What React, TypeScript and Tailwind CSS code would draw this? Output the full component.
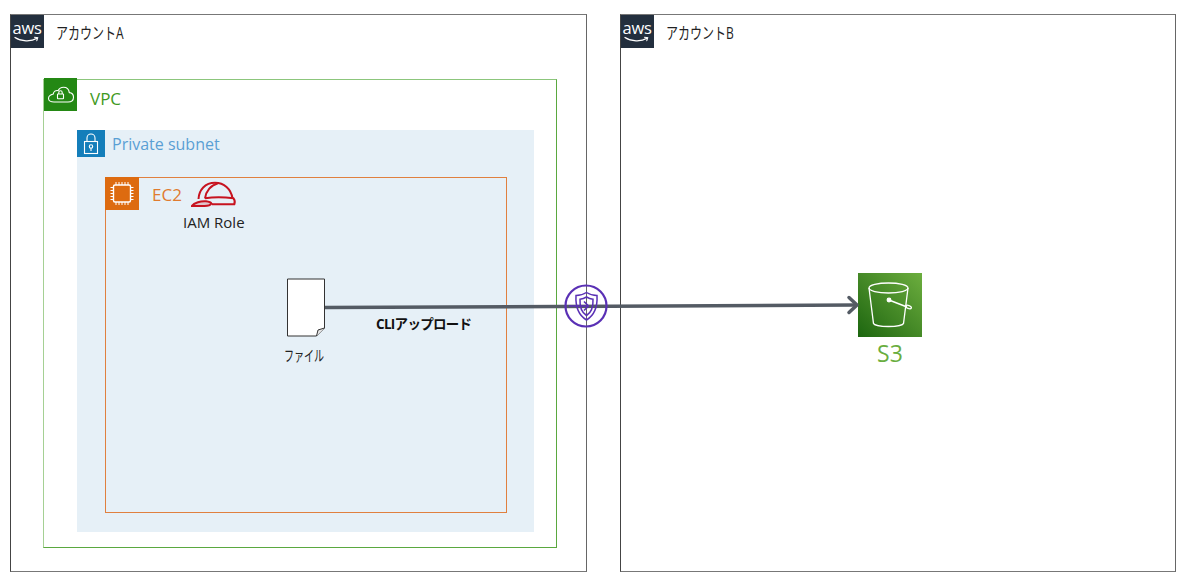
const jp = "font-['Open_Sans','Noto_Sans_CJK_JP',sans-serif]";

function AwsBadge() {
  return (
    <div className="w-[33px] h-[33px] bg-[#232f3e] flex items-center justify-center shrink-0">
      <svg width="33" height="33" viewBox="0 0 33 33" fill="none">
        <text x="16" y="19" textAnchor="middle" fontSize="16.500" fontWeight="500" letterSpacing="-.3" fill="#fff" fontFamily="Open Sans, sans-serif">aws</text>
        <path d="M4 22.500c6 4 16 4.500 22 .8" stroke="#fff" strokeWidth="1.300" strokeLinecap="round" />
        <path d="M23.500 22.200l3.200.4-.9 3" stroke="#fff" strokeWidth="1.100" strokeLinecap="round" />
      </svg>
    </div>
  );
}

function AccountHeader({ name }: { name: string }) {
  return (
    <div className="flex items-center h-[33px]">
      <AwsBadge />
      <span className="ml-[12px] pt-[2px] text-[16px] origin-left scale-x-[0.75] whitespace-nowrap text-[#222]">{name}</span>
    </div>
  );
}

function VpcIcon() {
  return (
    <svg width="33" height="33" viewBox="0 0 33 33" fill="none" stroke="#fff" strokeWidth="1.100">
      <path d="M10 24h14c3.500 0 5.500-2.200 5.500-4.800 0-2.400-1.800-4.400-4.200-4.600-.4-3.200-2.800-5.400-5.800-5.400-2.400 0-4.400 1.400-5.300 3.400-2.600-.6-4.700 1-4.900 3.400C6.200 16.800 4.500 18.600 4.500 20.400 4.500 22.400 6.800 24 10 24z" />
      <rect x="13.500" y="16" width="6" height="4.800" rx=".5" />
      <path d="M14.800 16v-1.500a1.700 1.700 0 0 1 3.400 0V16" />
    </svg>
  );
}

function LockIcon() {
  return (
    <svg width="28" height="28" viewBox="0 0 28 28" fill="none" stroke="#fff" strokeWidth="1.100">
      <rect x="7.500" y="11.500" width="13" height="12" />
      <path d="M10 11.500V8a4 4 0 0 1 8 0v3.500" />
      <circle cx="14" cy="16.500" r="1.700" />
      <path d="M14 18.200v2.800" />
    </svg>
  );
}

function ChipIcon() {
  return (
    <svg width="34" height="33" viewBox="0 0 34 33" fill="none" stroke="#fff">
      <rect x="8.500" y="8" width="17" height="17" rx="1.500" strokeWidth="1.400" />
      <path
        d="M11 5v3M14 5v3M17 5v3M20 5v3M23 5v3M11 25v3M14 25v3M17 25v3M20 25v3M23 25v3M5.500 10.500h3M5.500 13.500h3M5.500 16.500h3M5.500 19.500h3M5.500 22.500h3M25.500 10.500h3M25.500 13.500h3M25.500 16.500h3M25.500 19.500h3M25.500 22.500h3"
        strokeWidth="1"
      />
    </svg>
  );
}

function HelmetIcon() {
  return (
    <svg width="46" height="28" viewBox="0 0 46 28" fill="none" stroke="#c7131f" strokeWidth="2">
      <path d="M7.500 18C8 9 14 1.800 24 1.800c9 0 16 6 17.500 15.500" />
      <path d="M14 17.500C15 10 20 4 27 2.200" />
      <path d="M14 17.300c8-1.300 19-1.300 28.500 0 1.300 1.500 1.500 4 .8 6H21" />
      <path d="M1 24.800c2-3 9-5 14-4.500 2.500.3 5 1.300 5.500 2.300-1 1.700-3.500 2.400-7 2.400H1z" fill="#c7131f" fillOpacity=".2" />
    </svg>
  );
}

function FileIcon() {
  return (
    <svg width="40" height="60" viewBox="0 0 40 60" fill="#fff" stroke="#333" strokeWidth="1">
      <path d="M1.500 1h37v49l-8 8h-29z" />
      <path d="M30.500 58l1.500-6 6.500-2" fill="#e5e5e5" />
    </svg>
  );
}

function ArrowOverlay() {
  return (
    <svg className="absolute left-0 top-0 pointer-events-none" width="1200" height="576" fill="none">
      <path d="M325 307.500 856 305" stroke="#545b64" strokeWidth="3.500" />
      <path d="M849 297.500 857 305l-8 7.500" stroke="#545b64" strokeWidth="3.500" strokeLinecap="round" strokeLinejoin="round" />
      <g stroke="#5a30b5">
        <circle cx="586" cy="306" r="20.500" strokeWidth="2.200" />
        <path d="M586.500 292.500c3 2 6.500 3 10.500 3 .5 9-.5 18.500-10.500 24.500-10-6-11-15.500-10.500-24.500 4 0 7.500-1 10.500-3z" strokeWidth="1.500" />
        <path d="M586.500 297c2 1.200 4.300 2 6.500 2.200.3 6-.5 12.500-6.500 16.300-6-3.800-6.800-10.300-6.500-16.300 2.200-.2 4.500-1 6.500-2.200z" strokeWidth="1.500" />
        <path d="M569 306h19M584 301.500l4.500 4.500-4.500 4.500" strokeWidth="1.600" />
      </g>
    </svg>
  );
}

function BucketIcon() {
  return (
    <svg width="64" height="64" viewBox="0 0 64 64" fill="none" stroke="#fff" strokeWidth="1.300">
      <ellipse cx="30.500" cy="15" rx="19.500" ry="5" />
      <path d="M11 15l4.500 35.500c.5 1.500 7 3 15 3s14.500-1.500 15-3L50 15" />
      <circle cx="31" cy="27" r="1.800" fill="#fff" />
      <path d="M31 27l18 7" strokeWidth="1.500" />
      <ellipse cx="50.500" cy="34" rx="3" ry="1.500" transform="rotate(20 50.500 34)" />
    </svg>
  );
}

export default function App() {
  return (
    <div className={`${jp} relative w-[1200px] h-[576px] bg-white overflow-hidden flex gap-[33px] pl-[10px] pt-[14px]`}>
      <div className="w-[577px] h-[558px] border border-[#444] border-t-[#777] border-b-[#777] border-r-[#666]">
        <AccountHeader name="アカウントA" />

        <div className="mt-[31px] ml-[32px] w-[514px] h-[469px] border border-[#5aa83f] border-l-[#a5d094] border-t-[#8cc67c]">
          <div className="flex items-center h-[33px] -mt-[2px]">
            <div className="w-[33px] h-[33px] bg-[#248814] shrink-0">
              <VpcIcon />
            </div>
            <span className="ml-[13px] pt-[8px] text-[17px] text-[#3f9a22]">VPC</span>
          </div>

          <div className="mt-[19px] ml-[33px] w-[457px] h-[402px] bg-[#e6f0f7]">
            <div className="flex items-center h-[27px]">
              <div className="w-[28px] h-[27px] bg-[#147eba] shrink-0 overflow-hidden">
                <LockIcon />
              </div>
              <span className="ml-[7px] text-[16px] text-[#5a9fd4]">Private subnet</span>
            </div>

            <div className="mt-[20px] ml-[28px] w-[402px] h-[336px] border border-[#e0803f]">
              <div className="flex h-[33px] -mt-[1px] -ml-[1px]">
                <div className="w-[34px] h-[33px] bg-[#dd6b10] shrink-0">
                  <ChipIcon />
                </div>
                <span className="ml-[13px] text-[17px] leading-[36px] text-[#e07b2f]">EC2</span>
                <div className="ml-[9px] translate-y-[4px]">
                  <HelmetIcon />
                </div>
              </div>
              <div className="ml-[77px] mt-[2px] text-[15px] leading-[20px] text-[#222]">IAM Role</div>

              <div className="flex mt-[46px] ml-[180px]">
                <div className="w-[40px] shrink-0">
                  <FileIcon />
                  <div className="-ml-[4px] mt-[7px] w-[44px] flex justify-center text-[15px] leading-[20px] whitespace-nowrap text-[#222]">
                    <span className="shrink-0 scale-x-[0.67]">ファイル</span>
                  </div>
                </div>
                <div className="ml-[50px] mt-[36px] text-[13.500px] leading-[20px] font-bold tracking-[-0.700px] whitespace-nowrap text-[#111]">
                  CLIアップロード
                </div>
              </div>
            </div>
          </div>
        </div>
      </div>

      <div className="w-[556px] h-[558px] border border-[#444] border-t-[#777] border-b-[#777] border-r-[#666]">
        <AccountHeader name="アカウントB" />

        <div className="mt-[225px] ml-[237px] w-[64px] flex flex-col items-center">
          <div className="w-[64px] h-[64px] shrink-0 bg-gradient-to-tr from-[#1b660f] to-[#6cae3e]">
            <BucketIcon />
          </div>
          <span className="mt-[2px] text-[23px] leading-[28px] text-[#6aae3f]">S3</span>
        </div>
      </div>

      <ArrowOverlay />
    </div>
  );
}
